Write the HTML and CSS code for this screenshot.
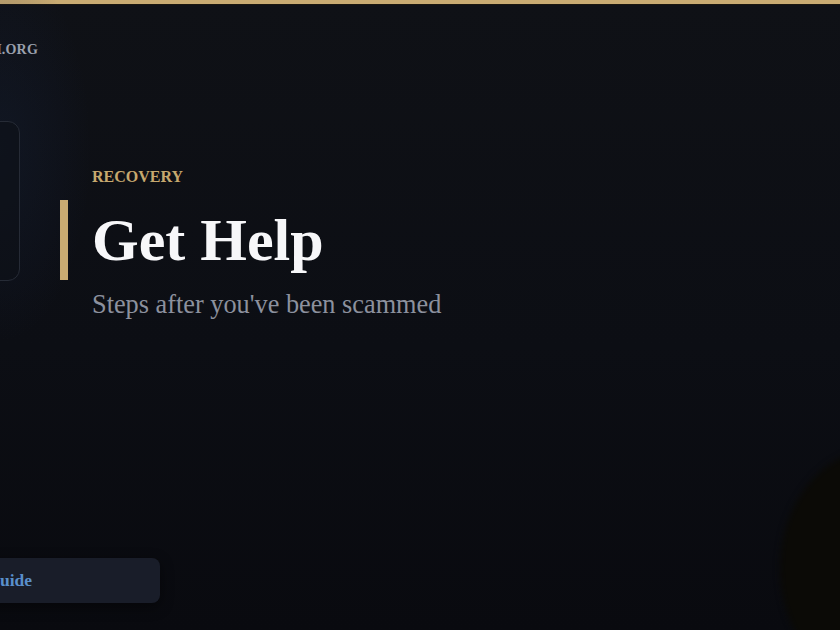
FILE: index.html
```html
<!DOCTYPE html>
<html>
<head>
<meta charset="utf-8">
<link rel="stylesheet" href="styles.css">
</head>
<body>
<div class="frame">
  <div class="topbar"></div>
  <div class="glow-tl"></div>
  <div class="glow-br"></div>
  <div class="layout">
    <aside class="sidebar">
      <div class="brand">SCAMWATCH.ORG</div>
      <div class="card"></div>
    </aside>
    <main class="main">
      <div class="eyebrow">RECOVERY</div>
      <h1 class="title">Get Help</h1>
      <p class="subtitle">Steps after you've been scammed</p>
    </main>
  </div>
  <div class="guide-btn">Safety Guide</div>
</div>
</body>
</html>
```
FILE: styles.css
```css
html, body {
  margin: 0;
  padding: 0;
  width: 840px;
  height: 630px;
  overflow: hidden;
  background: #0b0d12;
}
.frame {
  position: relative;
  width: 840px;
  height: 630px;
  overflow: hidden;
  background: linear-gradient(180deg, #0f1116 0%, #0c0e14 55%, #090a0f 100%);
  font-family: "Liberation Serif", "Times New Roman", serif;
}
.topbar {
  height: 4px;
  background: #c9ab72;
  border-bottom: 1px solid #1a160f;
}
.glow-tl {
  position: absolute;
  left: -90px;
  top: -40px;
  width: 180px;
  height: 380px;
  border-radius: 50%;
  background: radial-gradient(ellipse at center, rgba(24,38,66,0.30) 0%, rgba(20,30,55,0.14) 50%, rgba(0,0,0,0) 72%);
  pointer-events: none;
}
.glow-br {
  position: absolute;
  left: 780px;
  top: 448px;
  width: 200px;
  height: 240px;
  border-radius: 50%;
  background: #0b0a06;
  filter: blur(3px);
  pointer-events: none;
}
.layout {
  display: flex;
  height: 625px;
  position: relative;
}
.sidebar {
  width: 180px;
  margin-left: -142px;
  flex: none;
  display: flex;
  flex-direction: column;
}
.brand {
  margin-top: 37px;
  font-size: 14px;
  font-weight: bold;
  color: #9aa0ad;
  text-align: right;
  white-space: nowrap;
  letter-spacing: 0.2px;
}
.card {
  margin-top: 63px;
  width: 160px;
  height: 158px;
  border: 1px solid #262b36;
  border-radius: 12px;
  background: rgba(14,17,24,0.6);
}
.guide-btn {
  position: absolute;
  left: -140px;
  top: 558px;
  width: 300px;
  height: 45px;
  border-radius: 8px;
  background: #191d29;
  color: #5a8fcb;
  font-weight: bold;
  font-size: 17.5px;
  display: flex;
  align-items: center;
  justify-content: flex-end;
  padding-right: 128px;
  box-sizing: border-box;
  box-shadow: 0 4px 14px rgba(0,0,0,0.45);
  white-space: nowrap;
}
.main {
  flex: 1;
  padding-left: 54px;
  padding-top: 163px;
}
.eyebrow {
  font-size: 16px;
  line-height: 18px;
  font-weight: bold;
  color: #c6a86e;
}
.title {
  margin: 14px 0 0 -32px;
  padding-left: 24px;
  border-left: 8px solid #c9ab72;
  font-size: 60px;
  font-weight: bold;
  color: #f7f7f9;
  line-height: 80px;
  height: 80px;
}
.subtitle {
  margin: 10px 0 0 0;
  font-size: 26.3px;
  line-height: 30px;
  color: #8c919e;
}
```
